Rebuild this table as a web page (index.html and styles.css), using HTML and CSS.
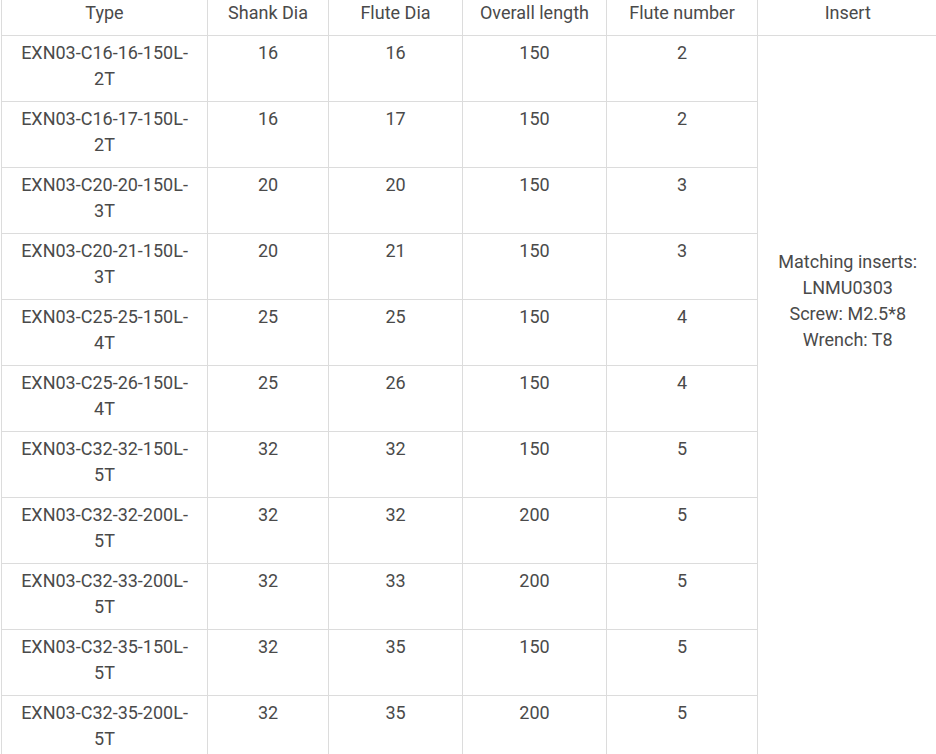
FILE: index.html
```html
<!DOCTYPE html>
<html>
<head>
<meta charset="utf-8">
<link rel="stylesheet" href="styles.css">
</head>
<body>
<table class="spec">
  <colgroup>
    <col class="c-type"><col class="c-shank"><col class="c-flute"><col class="c-len"><col class="c-num"><col class="c-ins">
  </colgroup>
  <thead>
    <tr><th>Type</th><th>Shank Dia</th><th>Flute Dia</th><th>Overall length</th><th>Flute number</th><th>Insert</th></tr>
  </thead>
  <tbody>
    <tr><td>EXN03-C16-16-150L-2T</td><td>16</td><td>16</td><td>150</td><td>2</td>
      <td rowspan="11" class="insert">Matching inserts:<br>LNMU0303<br>Screw: M2.5*8<br>Wrench: T8</td></tr>
    <tr><td>EXN03-C16-17-150L-2T</td><td>16</td><td>17</td><td>150</td><td>2</td></tr>
    <tr><td>EXN03-C20-20-150L-3T</td><td>20</td><td>20</td><td>150</td><td>3</td></tr>
    <tr><td>EXN03-C20-21-150L-3T</td><td>20</td><td>21</td><td>150</td><td>3</td></tr>
    <tr><td>EXN03-C25-25-150L-4T</td><td>25</td><td>25</td><td>150</td><td>4</td></tr>
    <tr><td>EXN03-C25-26-150L-4T</td><td>25</td><td>26</td><td>150</td><td>4</td></tr>
    <tr><td>EXN03-C32-32-150L-5T</td><td>32</td><td>32</td><td>150</td><td>5</td></tr>
    <tr><td>EXN03-C32-32-200L-5T</td><td>32</td><td>32</td><td>200</td><td>5</td></tr>
    <tr><td>EXN03-C32-33-200L-5T</td><td>32</td><td>33</td><td>200</td><td>5</td></tr>
    <tr><td>EXN03-C32-35-150L-5T</td><td>32</td><td>35</td><td>150</td><td>5</td></tr>
    <tr><td>EXN03-C32-35-200L-5T</td><td>32</td><td>35</td><td>200</td><td>5</td></tr>
  </tbody>
</table>
</body>
</html>
```
FILE: styles.css
```css
html, body {
  margin: 0;
  padding: 0;
  background: #fff;
}
body {
  font-family: Roboto, "Liberation Sans", sans-serif;
  font-size: 18px;
  line-height: 26px;
  color: #4a4a4a;
}
.spec {
  border-collapse: collapse;
  table-layout: fixed;
  width: 936px;
  margin-top: -5px;
  margin-left: 1px;
}
.c-type { width: 206px; }
.c-shank { width: 121px; }
.c-flute { width: 134px; }
.c-len { width: 144px; }
.c-num { width: 151px; }
.c-ins { width: 180px; }
.spec th,
.spec td {
  border: 1px solid #dcdcdc;
  padding: 4px 15px 9px;
  text-align: center;
  vertical-align: top;
  font-weight: normal;
}
.spec tr > :last-child {
  border-right: none;
}
.spec td.insert {
  vertical-align: middle;
  padding: 0 10px 196px;
}
```
